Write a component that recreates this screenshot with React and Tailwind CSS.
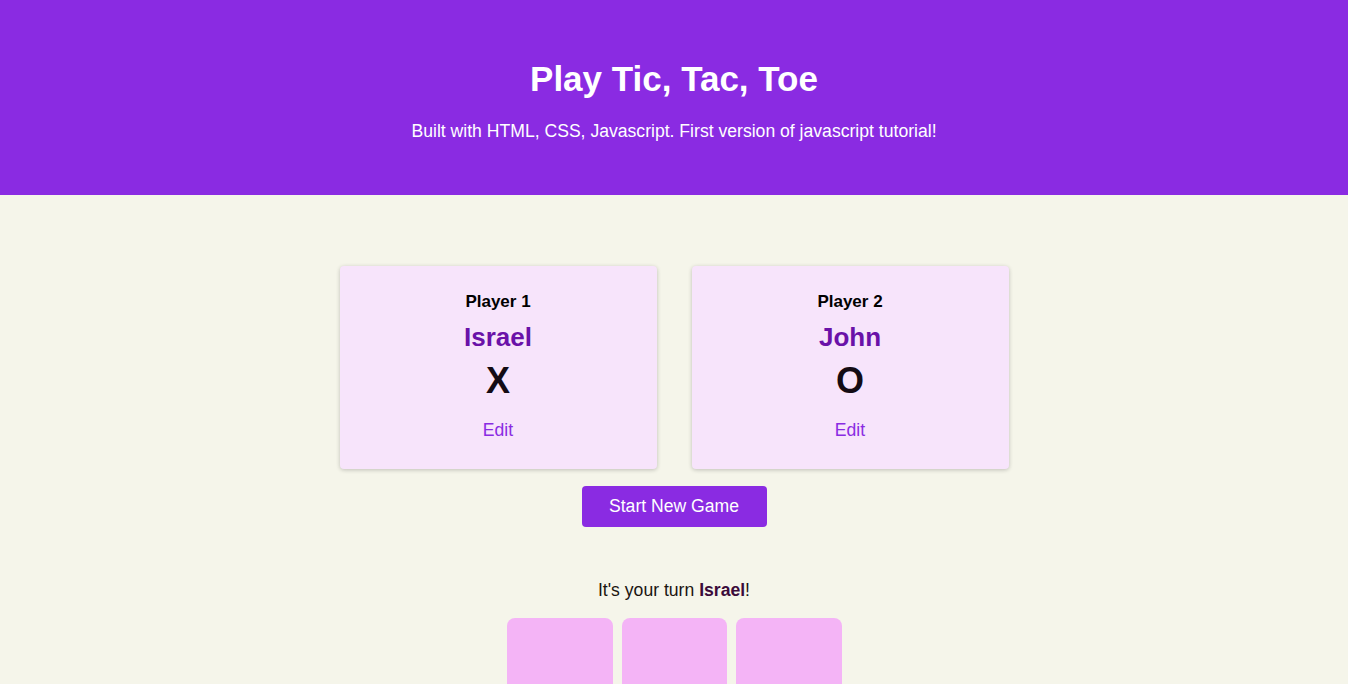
export default function App() {
  const players = [
    { label: 'Player 1', name: 'Israel', symbol: 'X' },
    { label: 'Player 2', name: 'John', symbol: 'O' },
  ];

  return (
    <div className="min-h-screen bg-[#f5f5ea] font-['Liberation_Sans',Arial,sans-serif] text-[#111]">
      <header className="h-[195px] bg-[#8a2be2] pt-[60px] text-center text-white">
        <h1 className="text-[35px] font-bold leading-[37px]">Play Tic, Tac, Toe</h1>
        <p className="mt-[24px] text-[17.6px] leading-[21px]">
          Built with HTML, CSS, Javascript. First version of javascript tutorial!
        </p>
      </header>

      <main className="flex flex-col items-center pt-[71px]">
        <ol className="flex gap-[35px]">
          {players.map((p) => (
            <li
              key={p.label}
              className="flex w-[317px] flex-col items-center rounded-[4px] bg-[#f7e4fb] pt-[26px] pb-[28px] text-center shadow-[0_1px_4px_rgba(0,0,0,0.22)]"
            >
              <h2 className="text-[17px] font-bold leading-[20px] text-black">{p.label}</h2>
              <h3 className="mt-[10px] text-[26px] font-bold leading-[30px] text-[#6a11a8]">{p.name}</h3>
              <p className="mt-[8px] text-[36px] font-bold leading-[41px] text-[#140b14]">{p.symbol}</p>
              <button className="mt-[19px] text-[17.6px] leading-[21px] text-[#8a2be2]">Edit</button>
            </li>
          ))}
        </ol>

        <button className="mt-[17px] h-[41px] w-[185px] rounded-[4px] bg-[#8a2be2] text-[17.6px] text-white">
          Start New Game
        </button>

        <p className="mt-[53px] text-[17.6px] leading-[21px] text-[#1a1410]">
          It's your turn <span className="font-bold text-[#3b0b3b]">Israel</span>!
        </p>

        <ol className="mt-[17px] grid grid-cols-[106px_105px_106px] gap-[9px]">
          {Array.from({ length: 9 }).map((_, i) => (
            <li key={i} className="h-[106px] rounded-[8px] bg-[#f4b4f6]" />
          ))}
        </ol>
      </main>
    </div>
  );
}
